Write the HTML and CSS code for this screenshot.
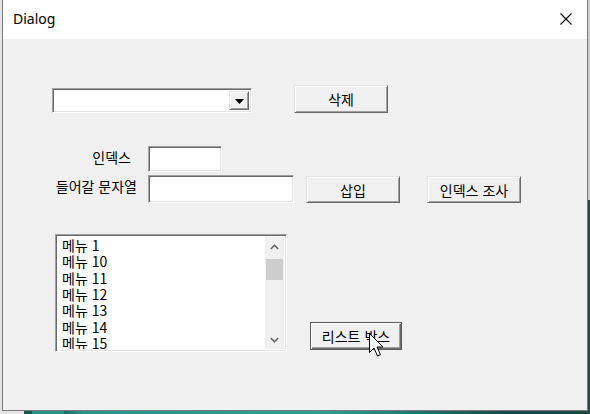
FILE: index.html
```html
<!DOCTYPE html>
<html lang="ko">
<head>
<meta charset="utf-8">
<title>Dialog</title>
<link rel="stylesheet" href="styles.css">
</head>
<body>
<div class="desktop">
  <div class="window">
    <div class="titlebar">
      <span class="title">Dialog</span>
      <svg class="close" width="12" height="12" viewBox="0 0 12 12"><path d="M0.5 0.5 L11.5 11.5 M11.5 0.5 L0.5 11.5" stroke="#000" stroke-width="1.1" fill="none"/></svg>
    </div>
    <div class="content">
      <div class="row row1">
        <div class="combo sunken">
          <div class="combo-field"></div>
          <div class="combo-btn raised"><svg width="9" height="5" viewBox="0 0 9 5"><path d="M0 0 H9 L4.5 5 Z" fill="#000"/></svg></div>
        </div>
        <button class="btn btn-delete">삭제</button>
      </div>
      <div class="row row2">
        <span class="label label-index">인덱스</span>
        <div class="edit sunken edit-index"></div>
      </div>
      <div class="row row3">
        <span class="label label-text">들어갈 문자열</span>
        <div class="edit sunken edit-text"></div>
        <button class="btn btn-insert">삽입</button>
        <button class="btn btn-find">인덱스 조사</button>
      </div>
      <div class="row row4">
        <div class="listbox sunken">
          <ul class="items">
            <li>메뉴 1</li>
            <li>메뉴 10</li>
            <li>메뉴 11</li>
            <li>메뉴 12</li>
            <li>메뉴 13</li>
            <li>메뉴 14</li>
            <li>메뉴 15</li>
          </ul>
          <div class="vscroll">
            <svg class="arrow" width="9" height="6" viewBox="0 0 9 6"><path d="M0.8 5 L4.5 1.3 L8.2 5" stroke="#606060" stroke-width="1.6" fill="none"/></svg>
            <div class="track"><div class="thumb"></div></div>
            <svg class="arrow" width="9" height="6" viewBox="0 0 9 6"><path d="M0.8 1 L4.5 4.7 L8.2 1" stroke="#606060" stroke-width="1.6" fill="none"/></svg>
          </div>
        </div>
        <button class="btn btn-default btn-list">리스트 박스</button>
      </div>
    </div>
    <svg class="cursor" width="16" height="25" viewBox="0 0 16 25"><path d="M0.5 0.5 V19.5 L5 15 L8.5 23 L11.5 21.7 L8 14 H14 Z" fill="#fff" stroke="#000" stroke-width="1" stroke-linejoin="miter"/></svg>
  </div>
  <div class="bottom-strip"></div>
</div>
</body>
</html>
```
FILE: styles.css
```css
html, body {
  margin: 0;
  padding: 0;
}
body {
  width: 590px;
  height: 414px;
  overflow: hidden;
  background:
    linear-gradient(to bottom, #cfcfcf 0, #cfcfcf 200px, #1e4a45 200px, #1e4a45 100%) right top / 2px 100% no-repeat,
    #e4e4e4;
  font-family: "Noto Sans CJK KR", "Noto Sans", sans-serif;
}
.desktop {
  position: relative;
  width: 590px;
  height: 414px;
}
.window {
  position: relative;
  margin-left: 2px;
  width: 584px;
  height: 410px;
  border: 1px solid #7a7a7a;
  border-top: none;
  background: #f0f0f0;
  display: flex;
  flex-direction: column;
}
.titlebar {
  height: 39px;
  background: #fff;
  display: flex;
  align-items: center;
  justify-content: space-between;
  padding: 0 15px 0 10px;
  flex: none;
}
.title {
  font-family: "Noto Sans", sans-serif;
  font-size: 14px;
  color: #000;
  margin-top: -2px;
}
.close {
  margin-top: -1px;
}
.content {
  flex: 1;
  font-size: 14px;
  color: #000;
}
.row {
  display: flex;
  align-items: flex-start;
}
.sunken {
  box-sizing: border-box;
  border: 1px solid;
  border-color: #a0a0a0 #ffffff #ffffff #a0a0a0;
  box-shadow: inset 1px 1px 0 #696969, inset -1px -1px 0 #e3e3e3;
  background: #fff;
}
.raised {
  box-sizing: border-box;
  border: 1px solid;
  border-color: #e3e3e3 #696969 #696969 #e3e3e3;
  box-shadow: inset 1px 1px 0 #ffffff, inset -1px -1px 0 #a0a0a0;
  background: #f0f0f0;
}
.btn {
  box-sizing: border-box;
  height: 28px;
  width: 94px;
  padding: 0;
  border: 1px solid;
  border-color: #e3e3e3 #696969 #696969 #e3e3e3;
  box-shadow: inset 1px 1px 0 #ffffff, inset -1px -1px 0 #a0a0a0;
  background: #f0f0f0;
  font-family: "Noto Sans CJK KR", "Noto Sans", sans-serif;
  font-size: 14px;
  color: #000;
  line-height: 1;
  display: flex;
  align-items: center;
  justify-content: center;
}
.btn-default {
  border: 1px solid #5a5a5a;
  box-shadow: inset 1px 1px 0 #ffffff, inset -1px -1px 0 #696969, inset -2px -2px 0 #a0a0a0;
}

/* row 1 */
.row1 {
  margin-top: 46px;
}
.combo {
  margin-left: 49px;
  margin-top: 3px;
  width: 200px;
  height: 25px;
  display: flex;
  padding: 2px;
  justify-content: flex-end;
}
.combo-btn {
  width: 20px;
  height: 100%;
  display: flex;
  align-items: center;
  justify-content: center;
  padding-top: 1px;
}
.btn-delete {
  margin-left: 42px;
}

/* row 2 */
.row2 {
  margin-top: 33px;
  height: 26px;
}
.label {
  text-align: right;
  white-space: nowrap;
  line-height: 16px;
}
.label-index {
  width: 128px;
  margin-top: 3px;
}
.edit-index {
  margin-left: 17px;
  width: 74px;
  height: 26px;
}

/* row 3 */
.row3 {
  margin-top: 3px;
}
.label-text {
  width: 134px;
  margin-top: 3px;
}
.edit-text {
  margin-left: 11px;
  width: 146px;
  height: 28px;
}
.btn-insert {
  margin-left: 12px;
  margin-top: 1px;
  height: 27px;
}
.btn-find {
  margin-left: 27px;
  margin-top: 1px;
  height: 27px;
}

/* row 4 */
.row4 {
  margin-top: 31px;
}
.listbox {
  margin-left: 52px;
  width: 232px;
  height: 118px;
  display: flex;
  padding: 2px;
}
.items {
  flex: 1;
  list-style: none;
  margin: 0;
  padding: 0 0 0 4px;
  overflow: hidden;
}
.items li {
  height: 16.33px;
  line-height: 16.33px;
  font-size: 14px;
  white-space: nowrap;
}
.vscroll {
  width: 19px;
  background: #f0f0f0;
  display: flex;
  flex-direction: column;
  align-items: center;
}
.vscroll .arrow {
  margin: 7px 0 6px;
  flex: none;
}
.track {
  flex: 1;
  width: 100%;
}
.thumb {
  margin-top: 3px;
  width: 17px;
  height: 21px;
  margin-left: 1px;
  background: #cdcdcd;
}
.btn-list {
  margin-left: 23px;
  margin-top: 88px;
  width: 92px;
  height: 28px;
}

.cursor {
  position: absolute;
  left: 366px;
  top: 333px;
}
.bottom-strip {
  height: 3px;
  margin-left: 24px;
  margin-right: 2px;
  background: linear-gradient(to right, #1b5a52 0, #1b5a52 8px, #2b958a 8px, #2b958a 40px, #226e66 40px, #2b958a 60px, #2f9e91 300px, #1b4a45 480px, #1b4a45 100%);
}
```
